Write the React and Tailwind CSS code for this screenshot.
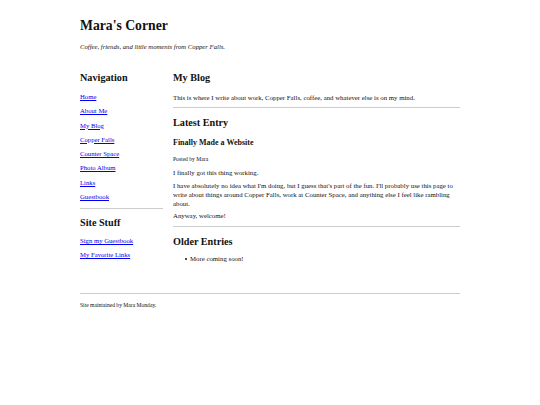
export default function App() {
  const nav = ['Home', 'About Me', 'My Blog', 'Copper Falls', 'Counter Space', 'Photo Album', 'Links', 'Guestbook'];
  const stuff = ['Sign my Guestbook', 'My Favorite Links'];

  return (
    <div className="min-h-[405px] bg-white text-[#111] font-['Liberation_Serif','Times_New_Roman',serif]">
      <div className="w-[380px] mx-auto pt-[17px]">
        <h1 className="text-[13.7px] font-bold leading-[18px]">Mara's Corner</h1>
        <p className="mt-[7px] text-[6.7px] italic leading-[9px]">Coffee, friends, and little moments from Copper Falls.</p>

        <div className="flex gap-[10px] mt-[20px]">
          <aside className="w-[83px] shrink-0">
            <h2 className="text-[10.2px] font-bold leading-[14px]">Navigation</h2>
            <ul className="mt-[8px] flex flex-col gap-[6.3px]">
              {nav.map((n) => (
                <li key={n} className="text-[6.7px] leading-[8px]">
                  <a href="#" className="text-[#0000ee] underline">{n}</a>
                </li>
              ))}
            </ul>
            <hr className="mt-[7px] border-t border-[#ccc]" />
            <h2 className="mt-[7px] text-[10.2px] font-bold leading-[14px]">Site Stuff</h2>
            <ul className="mt-[7px] flex flex-col gap-[6.3px]">
              {stuff.map((n) => (
                <li key={n} className="text-[6.7px] leading-[8px]">
                  <a href="#" className="text-[#0000ee] underline">{n}</a>
                </li>
              ))}
            </ul>
          </aside>

          <main className="flex-1 text-[6.8px] leading-[9px]">
            <h2 className="text-[10.2px] font-bold leading-[14px]">My Blog</h2>
            <p className="mt-[7.5px]">This is where I write about work, Copper Falls, coffee, and whatever else is on my mind.</p>
            <hr className="mt-[5.5px] border-t border-[#ccc]" />

            <h2 className="mt-[8px] text-[10.2px] font-bold leading-[14px]">Latest Entry</h2>
            <h3 className="mt-[6.5px] text-[8px] font-bold leading-[11px]">Finally Made a Website</h3>
            <p className="mt-[8px] text-[5.6px] leading-[7px]">Posted by Mara</p>
            <p className="mt-[5px]">I finally got this thing working.</p>
            <p className="mt-[4px]">
              I have absolutely no idea what I'm doing, but I guess that's part of the fun. I'll probably use this page to write about things around Copper Falls, work at Counter Space, and anything else I feel like rambling about.
            </p>
            <p className="mt-[3px]">Anyway, welcome!</p>
            <hr className="mt-[6.5px] border-t border-[#ccc]" />

            <h2 className="mt-[8px] text-[10.2px] font-bold leading-[14px]">Older Entries</h2>
            <ul className="mt-[5px] pl-[12px]">
              <li className="flex items-center gap-[3px]">
                <span className="w-[2px] h-[2px] rounded-full bg-[#111]" />
                <span>More coming soon!</span>
              </li>
            </ul>
          </main>
        </div>

        <footer className="mt-[30px]">
          <hr className="border-t border-[#ccc]" />
          <p className="mt-[8px] text-[5.6px] leading-[7px]">Site maintained by Mara Monday.</p>
        </footer>
      </div>
    </div>
  );
}
